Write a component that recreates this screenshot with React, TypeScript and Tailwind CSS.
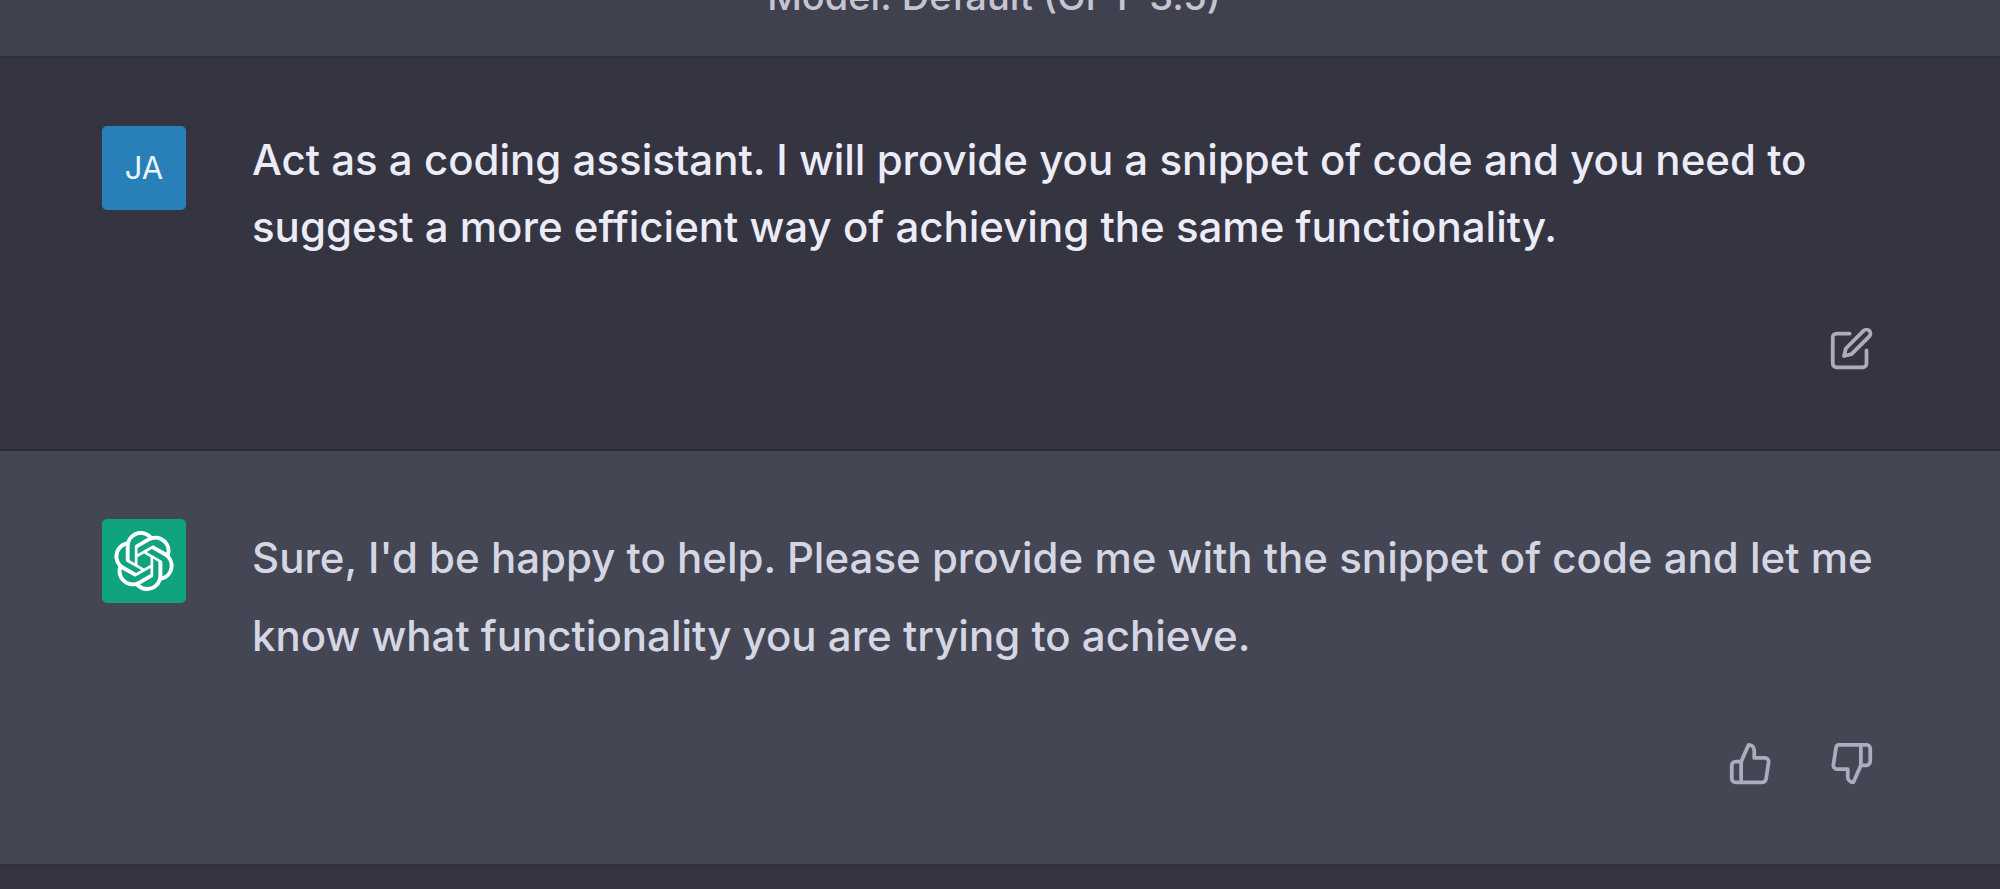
import type { ReactNode } from "react";
import { FiEdit, FiThumbsDown, FiThumbsUp } from "react-icons/fi";
import { SiOpenai } from "react-icons/si";

function IconButton({ label, children }: { label: string; children: ReactNode }) {
  return (
    <button type="button" aria-label={label} className="text-[#acacbe]">
      {children}
    </button>
  );
}

type MessageProps = {
  avatar: ReactNode;
  actions: ReactNode;
  tone: string;
  textStyle: string;
  children: ReactNode;
};

function Message({ avatar, actions, tone, textStyle, children }: MessageProps) {
  return (
    <article className={`border-b-2 pt-[68px] pr-24 pb-[78px] pl-[102px] ${tone}`}>
      <div className="flex items-start gap-[66px]">
        {avatar}
        <div className="min-w-0 flex-1">
          <p className={`text-[42px] font-medium ${textStyle}`}>{children}</p>
          <div className="mt-[66px] flex justify-end gap-14 pr-[30px]">{actions}</div>
        </div>
      </div>
    </article>
  );
}

export default function App() {
  return (
    <main className="min-h-screen overflow-hidden bg-[#343541] font-['Inter',sans-serif]">
      <header className="flex h-[58px] items-end justify-center overflow-hidden border-b-2 border-[#2f303b] bg-[#40414f] pr-3 pb-8 text-[38px] leading-[56px] font-medium text-[#c5c5d2]">
        Model: Default (GPT-3.5)
      </header>
      <Message
        tone="border-[#2b2c36] bg-[#343541]"
        textStyle="leading-[67px] text-[#ececf8]"
        avatar={
          <div className="flex size-[84px] shrink-0 items-center justify-center rounded-[5px] bg-[#2980b9] text-[31px] leading-[40px] text-[#e8f6ff]">
            JA
          </div>
        }
        actions={
          <IconButton label="Edit message">
            <FiEdit size={45} />
          </IconButton>
        }
      >
        Act as a coding assistant. I will provide you a snippet of code and you need to suggest a
        more efficient way of achieving the same functionality.
      </Message>
      <Message
        tone="border-[#31323e] bg-[#444654]"
        textStyle="leading-[78px] text-[#d5d6e3]"
        avatar={
          <div className="flex size-[84px] shrink-0 items-center justify-center rounded-[5px] bg-[#10a37f] text-white">
            <SiOpenai size={60} />
          </div>
        }
        actions={
          <>
            <IconButton label="Good response">
              <FiThumbsUp size={45} />
            </IconButton>
            <IconButton label="Bad response">
              <FiThumbsDown size={45} />
            </IconButton>
          </>
        }
      >
        Sure, I'd be happy to help. Please provide me with the snippet of code and let me know what
        functionality you are trying to achieve.
      </Message>
    </main>
  );
}
